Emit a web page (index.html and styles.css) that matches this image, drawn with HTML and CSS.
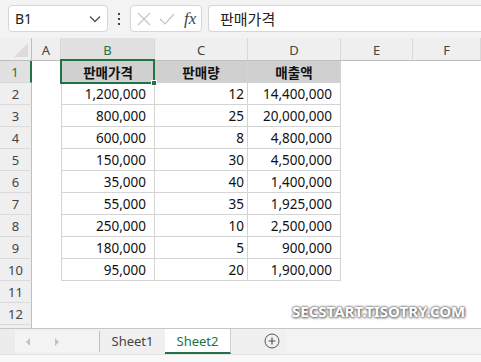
FILE: index.html
```html
<!DOCTYPE html>
<html lang="ko">
<head>
<meta charset="utf-8">
<title>Excel</title>
<link rel="stylesheet" href="styles.css">
</head>
<body>
<div class="app">
  <div class="toolbar">
    <div class="namebox">
      <span class="name">B1</span>
      <svg class="chev" width="12" height="8" viewBox="0 0 12 8"><polyline points="1,1.5 6,6.5 11,1.5" fill="none" stroke="#505050" stroke-width="1.3"/></svg>
    </div>
    <div class="dots"><i></i><i></i><i></i></div>
    <div class="fxbox">
      <svg width="14" height="14" viewBox="0 0 14 14"><path d="M1 1 L13 13 M13 1 L1 13" stroke="#c4c4c4" stroke-width="1.2" fill="none"/></svg>
      <svg width="16" height="14" viewBox="0 0 16 14"><polyline points="1,7 6,12 15,2" stroke="#c4c4c4" stroke-width="1.2" fill="none"/></svg>
      <span class="fx">fx</span>
    </div>
    <div class="formula">판매가격</div>
  </div>

  <div class="sheet">
    <div class="grid">
      <div class="corner"><span class="tri"></span></div>
      <div class="ch">A</div>
      <div class="ch sel">B</div>
      <div class="ch">C</div>
      <div class="ch">D</div>
      <div class="ch">E</div>
      <div class="ch">F</div>

      <div class="rh sel">1</div>
      <div class="c"></div>
      <div class="t first hd active">판매가격<span class="ring"><span class="handle"></span></span></div>
      <div class="t hd">판매량</div>
      <div class="t hd">매출액</div>
      <div class="c"></div>
      <div class="c"></div>

      <div class="rh">2</div>
      <div class="c"></div>
      <div class="t first num wide">1,200,000</div>
      <div class="t num">12</div>
      <div class="t num wide">14,400,000</div>
      <div class="c"></div>
      <div class="c"></div>

      <div class="rh">3</div>
      <div class="c"></div>
      <div class="t first num wide">800,000</div>
      <div class="t num">25</div>
      <div class="t num wide">20,000,000</div>
      <div class="c"></div>
      <div class="c"></div>

      <div class="rh">4</div>
      <div class="c"></div>
      <div class="t first num wide">600,000</div>
      <div class="t num">8</div>
      <div class="t num wide">4,800,000</div>
      <div class="c"></div>
      <div class="c"></div>

      <div class="rh">5</div>
      <div class="c"></div>
      <div class="t first num wide">150,000</div>
      <div class="t num">30</div>
      <div class="t num wide">4,500,000</div>
      <div class="c"></div>
      <div class="c"></div>

      <div class="rh">6</div>
      <div class="c"></div>
      <div class="t first num wide">35,000</div>
      <div class="t num">40</div>
      <div class="t num wide">1,400,000</div>
      <div class="c"></div>
      <div class="c"></div>

      <div class="rh">7</div>
      <div class="c"></div>
      <div class="t first num wide">55,000</div>
      <div class="t num">35</div>
      <div class="t num wide">1,925,000</div>
      <div class="c"></div>
      <div class="c"></div>

      <div class="rh">8</div>
      <div class="c"></div>
      <div class="t first num wide">250,000</div>
      <div class="t num">10</div>
      <div class="t num wide">2,500,000</div>
      <div class="c"></div>
      <div class="c"></div>

      <div class="rh">9</div>
      <div class="c"></div>
      <div class="t first num wide">180,000</div>
      <div class="t num">5</div>
      <div class="t num wide">900,000</div>
      <div class="c"></div>
      <div class="c"></div>

      <div class="rh">10</div>
      <div class="c"></div>
      <div class="t first num wide">95,000</div>
      <div class="t num">20</div>
      <div class="t num wide">1,900,000</div>
      <div class="c"></div>
      <div class="c"></div>

      <div class="rh">11</div>
      <div class="c"></div><div class="c"></div><div class="c"></div><div class="c"></div><div class="c"></div><div class="c"></div>

      <div class="rh">12</div>
      <div class="c"></div><div class="c"></div><div class="c"></div><div class="c"></div><div class="c"></div><div class="c"></div>

      <div class="rh"></div>
      <div class="c"></div><div class="c"></div><div class="c"></div><div class="c"></div><div class="c"></div><div class="c"></div>
    </div>
    <div class="watermark">SECSTART.TISOTRY.COM</div>
  </div>

  <div class="tabs">
    <div class="edge"></div>
    <div class="nav">
      <svg width="8" height="10" viewBox="0 0 8 10"><polygon points="6,1 2,5 6,9" fill="#c2c2c2"/></svg>
      <svg width="8" height="10" viewBox="0 0 8 10"><polygon points="2,1 6,5 2,9" fill="#c2c2c2"/></svg>
    </div>
    <div class="tab">Sheet1</div>
    <div class="tab on">Sheet2</div>
    <div class="add">
      <svg width="16" height="16" viewBox="0 0 16 16"><circle cx="8" cy="8" r="7" fill="none" stroke="#555" stroke-width="1"/><path d="M8 4.5 V11.5 M4.5 8 H11.5" stroke="#555" stroke-width="1.2"/></svg>
    </div>
    <div class="rest"></div>
  </div>
  <div class="status"></div>
</div>
</body>
</html>
```

FILE: styles.css
```css
* { box-sizing: border-box; }
html, body { margin: 0; padding: 0; }
body {
  width: 481px;
  height: 362px;
  overflow: hidden;
  background: #ffffff;
  font-family: "Noto Sans", "Noto Sans CJK KR", sans-serif;
  color: #1a1a1a;
}
.app {
  width: 481px;
  height: 362px;
  display: flex;
  flex-direction: column;
}

/* toolbar */
.toolbar {
  height: 38px;
  flex: none;
  background: #f3f3f3;
  display: flex;
  align-items: flex-start;
  padding: 5px 0 0 8px;
}
.namebox {
  width: 100px;
  height: 27px;
  background: #fff;
  border: 1px solid #d6d6d6;
  border-radius: 4px;
  display: flex;
  align-items: center;
  justify-content: space-between;
  padding: 0 6px 0 6px;
}
.name { font-size: 14px; color: #222; }
.chev { margin-top: 1px; }
.dots {
  width: 22px;
  height: 27px;
  display: flex;
  flex-direction: column;
  align-items: center;
  justify-content: center;
  gap: 3px;
}
.dots i {
  display: block;
  width: 2px;
  height: 2px;
  background: #444;
}
.fxbox {
  width: 72px;
  height: 27px;
  background: #fff;
  border: 1px solid #d6d6d6;
  border-radius: 4px;
  display: flex;
  align-items: center;
  padding: 0 4px 0 6px;
  gap: 8px;
}
.fx {
  font-family: "Liberation Serif", serif;
  font-style: italic;
  font-size: 17px;
  color: #444;
  margin-left: 1px;
  line-height: 1;
}
.formula {
  margin-left: 6px;
  flex: 1;
  height: 27px;
  background: #fff;
  border: 1px solid #d6d6d6;
  border-right: none;
  border-radius: 4px 0 0 4px;
  font-size: 15px;
  display: flex;
  align-items: center;
  padding-left: 11px;
  color: #222;
}

/* sheet */
.sheet {
  position: relative;
  height: 290px;
  flex: none;
  overflow: hidden;
  background: #fff;
}
.grid {
  display: grid;
  grid-template-columns: 32px 29px 94px 93px 93px 72px 1fr;
  grid-template-rows: 23px;
  grid-auto-rows: 22px;
}
.corner {
  background: #efefef;
  border-right: 1px solid #bdbdbd;
  border-bottom: 1px solid #bdbdbd;
  position: relative;
}
.tri {
  position: absolute;
  right: 3px;
  bottom: 3px;
  width: 0;
  height: 0;
  border-left: 14px solid transparent;
  border-bottom: 14px solid #dcdcdc;
}
.ch {
  background: #efefef;
  border-right: 1px solid #d8d8d8;
  border-bottom: 1px solid #bdbdbd;
  font-size: 13px;
  color: #444;
  display: flex;
  align-items: center;
  justify-content: center;
  padding-top: 1px;
}
.ch.sel {
  background: #e1e1e1;
  color: #217346;
}
.rh {
  background: #efefef;
  border-right: 1px solid #bdbdbd;
  border-bottom: 1px solid #dadada;
  font-size: 13px;
  color: #444;
  display: flex;
  align-items: center;
  justify-content: center;
}
.rh.sel {
  background: #e1e1e1;
  color: #217346;
  border-right: 2px solid #217346;
}
.c { background: #fff; }
.t {
  border-right: 1px solid #d4d4d4;
  border-bottom: 1px solid #d4d4d4;
  font-size: 13.5px;
  display: flex;
  align-items: center;
  color: #111;
  padding-top: 1px;
  white-space: nowrap;
}
.t.first { border-left: 1px solid #d4d4d4; }
.hd {
  background: #d0d0d0;
  justify-content: center;
  font-weight: 700;
  font-size: 13.5px;
}
.num {
  justify-content: flex-end;
  padding-right: 3px;
}
.num.wide { padding-right: 8px; }
.active { position: relative; }
.ring {
  position: absolute;
  left: -2px;
  top: -2px;
  right: -1px;
  bottom: -2px;
  border: 2px solid #217346;
}
.handle {
  position: absolute;
  right: -4px;
  bottom: -4px;
  width: 6px;
  height: 6px;
  background: #217346;
  border: 1px solid #fff;
}
.watermark {
  position: absolute;
  left: 292px;
  top: 263px;
  font-family: "Noto Sans", sans-serif;
  font-weight: 700;
  font-size: 15px;
  letter-spacing: 0;
  color: #fff;
  text-shadow: 0 0 2px #555, 0 0 3px #777, 1px 1px 3px #888;
}

/* tabs */
.tabs {
  height: 26px;
  flex: none;
  background: #f0f0f0;
  border-top: 1px solid #c6c6c6;
  display: flex;
  align-items: stretch;
}
.edge {
  width: 15px;
  background: #ececec;
}
.nav {
  width: 85px;
  background: #f4f4f4;
  display: flex;
  align-items: center;
  gap: 21px;
  padding-left: 9px;
  border-right: 1px solid #bdbdbd;
  margin: 2px 0 2px 0;
}
.tab {
  width: 65px;
  font-size: 13px;
  color: #444;
  display: flex;
  align-items: center;
  justify-content: center;
  background: #f0f0f0;
  padding-bottom: 1px;
}
.tab.on {
  background: #fff;
  color: #217346;
  border-bottom: 2px solid #217346;
  border-right: 1px solid #d0d0d0;
  padding-top: 1px;
  width: 66px;
}
.add {
  width: 56px;
  display: flex;
  align-items: center;
  justify-content: flex-start;
  padding-left: 33px;
  padding-bottom: 1px;
}
.rest {
  flex: 1;
  background: #f3f3f3;
}
.status {
  height: 8px;
  flex: none;
  background: #f8f8f8;
  border-top: 1px solid #e4e4e4;
}
```
